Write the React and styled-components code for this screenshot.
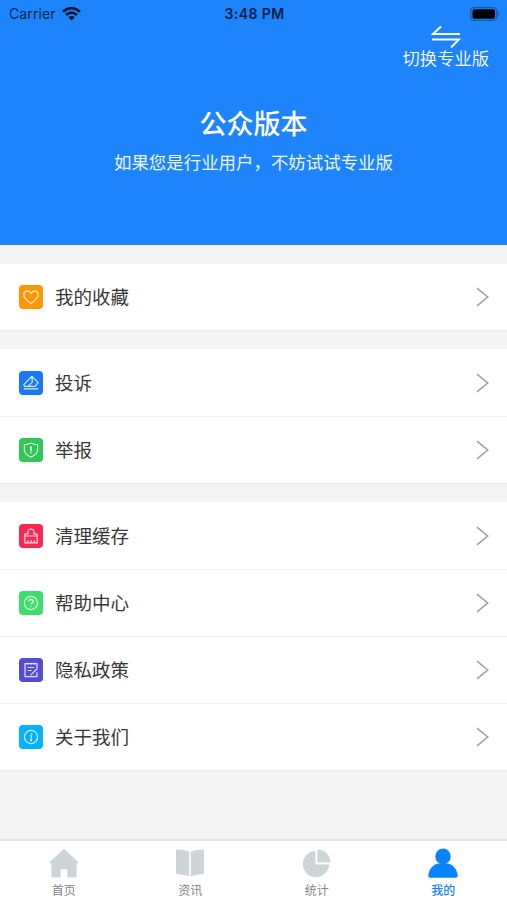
import React from "react";
import styled, { createGlobalStyle } from "styled-components";

const GlobalStyle = createGlobalStyle`
  * { box-sizing: border-box; }
  body { margin: 0; background: #f4f4f4; }
`;

const Screen = styled.div`
  display: flex;
  flex-direction: column;
  width: 100%;
  height: 900px;
  overflow: hidden;
  background: #f4f4f4;
  font-family: "Noto Sans CJK SC", sans-serif;
`;

const Header = styled.header`
  height: 245px;
  flex: none;
  background: #1d84fc;
  color: #fff;
  display: flex;
  flex-direction: column;
`;

const StatusBar = styled.div`
  height: 26px;
  flex: none;
  display: grid;
  grid-template-columns: 1fr auto 1fr;
  align-items: center;
  padding: 1px 7px 0 9px;
  font-family: Inter, sans-serif;
  font-size: 14px;
  color: #06264f;
`;

const Carrier = styled.div`
  display: flex;
  align-items: center;
  gap: 6px;
  letter-spacing: 0.12px;
`;

const Clock = styled.div`
  font-size: 14px;
  font-weight: 600;
  letter-spacing: 0.4px;
  color: #04204a;
`;

const BatterySlot = styled.div`
  display: flex;
  justify-content: flex-end;
`;

const SwitchButton = styled.button`
  align-self: flex-end;
  display: flex;
  flex-direction: column;
  align-items: center;
  height: 44px;
  margin: 0 18px 0 0;
  padding: 0;
  border: 0;
  background: none;
  color: #fff;
  font: 350 17.3px/20px "Noto Sans CJK SC", sans-serif;
  white-space: nowrap;

  svg { display: block; }
`;

const Title = styled.h1`
  margin: 33px 0 0;
  font-size: 27px;
  line-height: 40px;
  font-weight: 500;
  text-align: center;
`;

const Subtitle = styled.p`
  margin: 6px 0 0;
  font-size: 17.45px;
  line-height: 26px;
  text-align: center;
  color: #ecf6ff;
`;

const Menu = styled.main`
  flex: 1;
  display: flex;
  flex-direction: column;
  gap: 19px;
  padding-top: 19px;
`;

const Group = styled.section`
  background: #fff;
  box-shadow: 0 1px 0 #ececec;
`;

const Row = styled.div`
  display: flex;
  align-items: center;
  height: ${(p) => p.$height}px;
  padding: 0 18px 0 19px;
  & + & { border-top: 1px solid #f1f1f1; }
`;

const Badge = styled.span`
  width: 24px;
  height: 24px;
  border-radius: 4px;
  background: ${(p) => p.$color};
  flex: none;
  svg { display: block; }
`;

const Label = styled.span`
  flex: 1;
  margin-left: 12px;
  padding-bottom: 2px;
  font-size: 18.5px;
  line-height: 28px;
  color: #383838;
`;

const TabBar = styled.nav`
  display: grid;
  grid-template-columns: repeat(4, 126.5px);
  height: 61px;
  flex: none;
  border-top: 2px solid #e4e4e4;
  background: #fff;
`;

const Tab = styled.div`
  display: flex;
  flex-direction: column;
  align-items: center;
  padding: 7px 0 0 1px;
  font-size: 12px;
  line-height: 18px;
  font-weight: ${(p) => (p.$active ? 500 : 400)};
  color: ${(p) => (p.$active ? "#1684fb" : "#858585")};
  svg { display: block; margin-bottom: 3px; }
`;

const drawings = {
  heart: <path d="M12 18.6C8.1 15.7 4.8 13 4.8 10C4.8 5.6 10 4.8 12 8.2C14 4.8 19.2 5.6 19.2 10C19.2 13 15.9 15.7 12 18.6Z" />,
  complaint: (
    <>
      <path d="M4.8 13.6L12.8 5.4L19.1 11.6L16.1 15.4H5.6Z" />
      <path d="M12.8 5.6L13.4 11.2L9.4 15.2M4.8 17.8H19.2" />
    </>
  ),
  shield: (
    <>
      <path d="M12 5Q14.7 6.6 18.6 6.7V11.8Q18.4 16.6 12 19.1Q5.6 16.6 5.4 11.8V6.7Q9.3 6.6 12 5Z" />
      <path d="M12 8.5V13M12 13.8V15.2" strokeWidth="1.8" />
    </>
  ),
  clean: (
    <>
      <path d="M5.8 12V10.6Q5.8 9.8 6.6 9.8H9.2L8.9 8Q9.2 5 12 5Q14.8 5 15.1 8L14.8 9.8H17.4Q18.2 9.8 18.2 10.6V12ZM5.8 12V18.8H18.2V12" />
      <path d="M8.8 18.5V16.2M12 18.5V16.2M15.2 18.5V16.2" />
    </>
  ),
  help: (
    <>
      <circle cx="12" cy="12" r="6.6" />
      <path d="M9.8 10.4Q9.9 8.5 12 8.5Q14.3 8.5 14.3 10.4Q14.3 11.5 12.9 12.1Q12 12.6 12 13.5M12 14.9V15.9" strokeWidth="1.3" />
    </>
  ),
  policy: (
    <>
      <path d="M18 10V5.6H6V18.6H18V14.2M8.5 4.8V6.8M12 4.8V6.8M15.5 4.8V6.8M8.8 9.5H15.2M8.8 12.5H12.5" />
      <path d="M18.3 10.5L12.7 16.1L11.7 17.4" />
    </>
  ),
  about: (
    <>
      <circle cx="12" cy="12" r="6.6" />
      <path d="M12.7 8V9.4M11.2 11H12.5L11.7 15.7H12.9" strokeWidth="1.3" />
    </>
  ),
};

function RowIcon({ name }) {
  return (
    <svg width="24" height="24" viewBox="0 0 24 24" fill="none" stroke="#fff" strokeOpacity="0.82" strokeWidth="1.2" strokeLinejoin="round">
      {drawings[name]}
    </svg>
  );
}

function Chevron() {
  return (
    <svg width="13" height="20" viewBox="0 0 13 20" fill="none" stroke="#a2a2a2" strokeWidth="1.6">
      <path d="M1 1.2L11.7 10L1 18.8" />
    </svg>
  );
}

const tabDrawings = {
  home: <path d="M15 .8L29.4 14.2L28.4 15.4H27.6V28.4Q27.6 29.5 26.5 29.5H18.3V21.2H11.7V29.5H3.5Q2.4 29.5 2.4 28.4V15.4H1.6L.6 14.2Z" />,
  book: (
    <>
      <path d="M1.5 1.6Q7 1 14.2 3.4V28.2Q7.5 26.4 2 26Q1 26 1 25V2.2Z" />
      <path d="M15.8 3.4Q23 1 28.5 1.6L29 2.2V25Q29 26 28 26Q22.5 26.4 15.8 28.2Z" />
    </>
  ),
  chart: (
    <>
      <path d="M13.5 3V16.5H27.1A13.1 13.1 0 1 1 13.5 3Z" />
      <path d="M15.3 1.6A12.9 12.9 0 0 1 28.4 14.5H15.3Z" />
    </>
  ),
  user: (
    <>
      <ellipse cx="15" cy="8.4" rx="7.7" ry="7.9" />
      <path d="M9.8 15.4H20.2C26 17 29.4 22.5 29.7 27.7Q29.7 29.7 28 29.7H2Q.3 29.7 .3 27.7C.6 22.5 4 17 9.8 15.4Z" />
    </>
  ),
};

const groups = [
  [{ label: "我的收藏", icon: "heart", color: "#ff9702", height: 66 }],
  [
    { label: "投诉", icon: "complaint", color: "#1a78fb", height: 67 },
    { label: "举报", icon: "shield", color: "#2fc758", height: 67 },
  ],
  [
    { label: "清理缓存", icon: "clean", color: "#fa2854", height: 67 },
    { label: "帮助中心", icon: "help", color: "#41dd6c", height: 67 },
    { label: "隐私政策", icon: "policy", color: "#584bd3", height: 67 },
    { label: "关于我们", icon: "about", color: "#03b1fc", height: 67 },
  ],
];

const tabs = [
  { label: "首页", icon: "home" },
  { label: "资讯", icon: "book" },
  { label: "统计", icon: "chart" },
  { label: "我的", icon: "user", active: true },
];

export default function App() {
  return (
    <Screen>
      <GlobalStyle />
      <Header>
        <StatusBar>
          <Carrier>
            Carrier
            <svg width="19" height="14" viewBox="0 0 19 14" fill="none" stroke="#021631" strokeWidth="2.7">
              <path d="M1 4.8Q9.5-2.4 18 4.8M4 8Q9.5 3.3 15 8" />
              <path d="M6.3 10.2Q9.5 7.8 12.7 10.2L9.5 13.4Z" fill="#021631" stroke="none" />
            </svg>
          </Carrier>
          <Clock>3:48 PM</Clock>
          <BatterySlot>
            <svg width="31" height="14" viewBox="0 0 31 14">
              <rect x="1.7" y=".7" width="26" height="12.6" rx="3.5" fill="none" stroke="#1259aa" strokeWidth="1.3" />
              <rect x="3.5" y="2.3" width="22.5" height="9.4" rx="1.8" fill="#000205" />
              <path d="M29 4.7Q31 7 29 9.3Z" fill="#1259aa" />
            </svg>
          </BatterySlot>
        </StatusBar>
        <SwitchButton>
          <svg width="30" height="22" viewBox="0 0 30 22" fill="none" stroke="#fff" strokeWidth="1.9">
            <path d="M10 .5L2 8H29M1 13.5H28L20 21.5" />
          </svg>
          切换专业版
        </SwitchButton>
        <Title>公众版本</Title>
        <Subtitle>如果您是行业用户，不妨试试专业版</Subtitle>
      </Header>
      <Menu>
        {groups.map((rows) => (
          <Group key={rows[0].label}>
            {rows.map((row) => (
              <Row key={row.label} $height={row.height}>
                <Badge $color={row.color}><RowIcon name={row.icon} /></Badge>
                <Label>{row.label}</Label>
                <Chevron />
              </Row>
            ))}
          </Group>
        ))}
      </Menu>
      <TabBar>
        {tabs.map((tab) => (
          <Tab key={tab.label} $active={tab.active}>
            <svg width="30" height="30" viewBox="0 0 30 30" fill={tab.active ? "#0783ff" : "#ced5d7"}>
              {tabDrawings[tab.icon]}
            </svg>
            {tab.label}
          </Tab>
        ))}
      </TabBar>
    </Screen>
  );
}
